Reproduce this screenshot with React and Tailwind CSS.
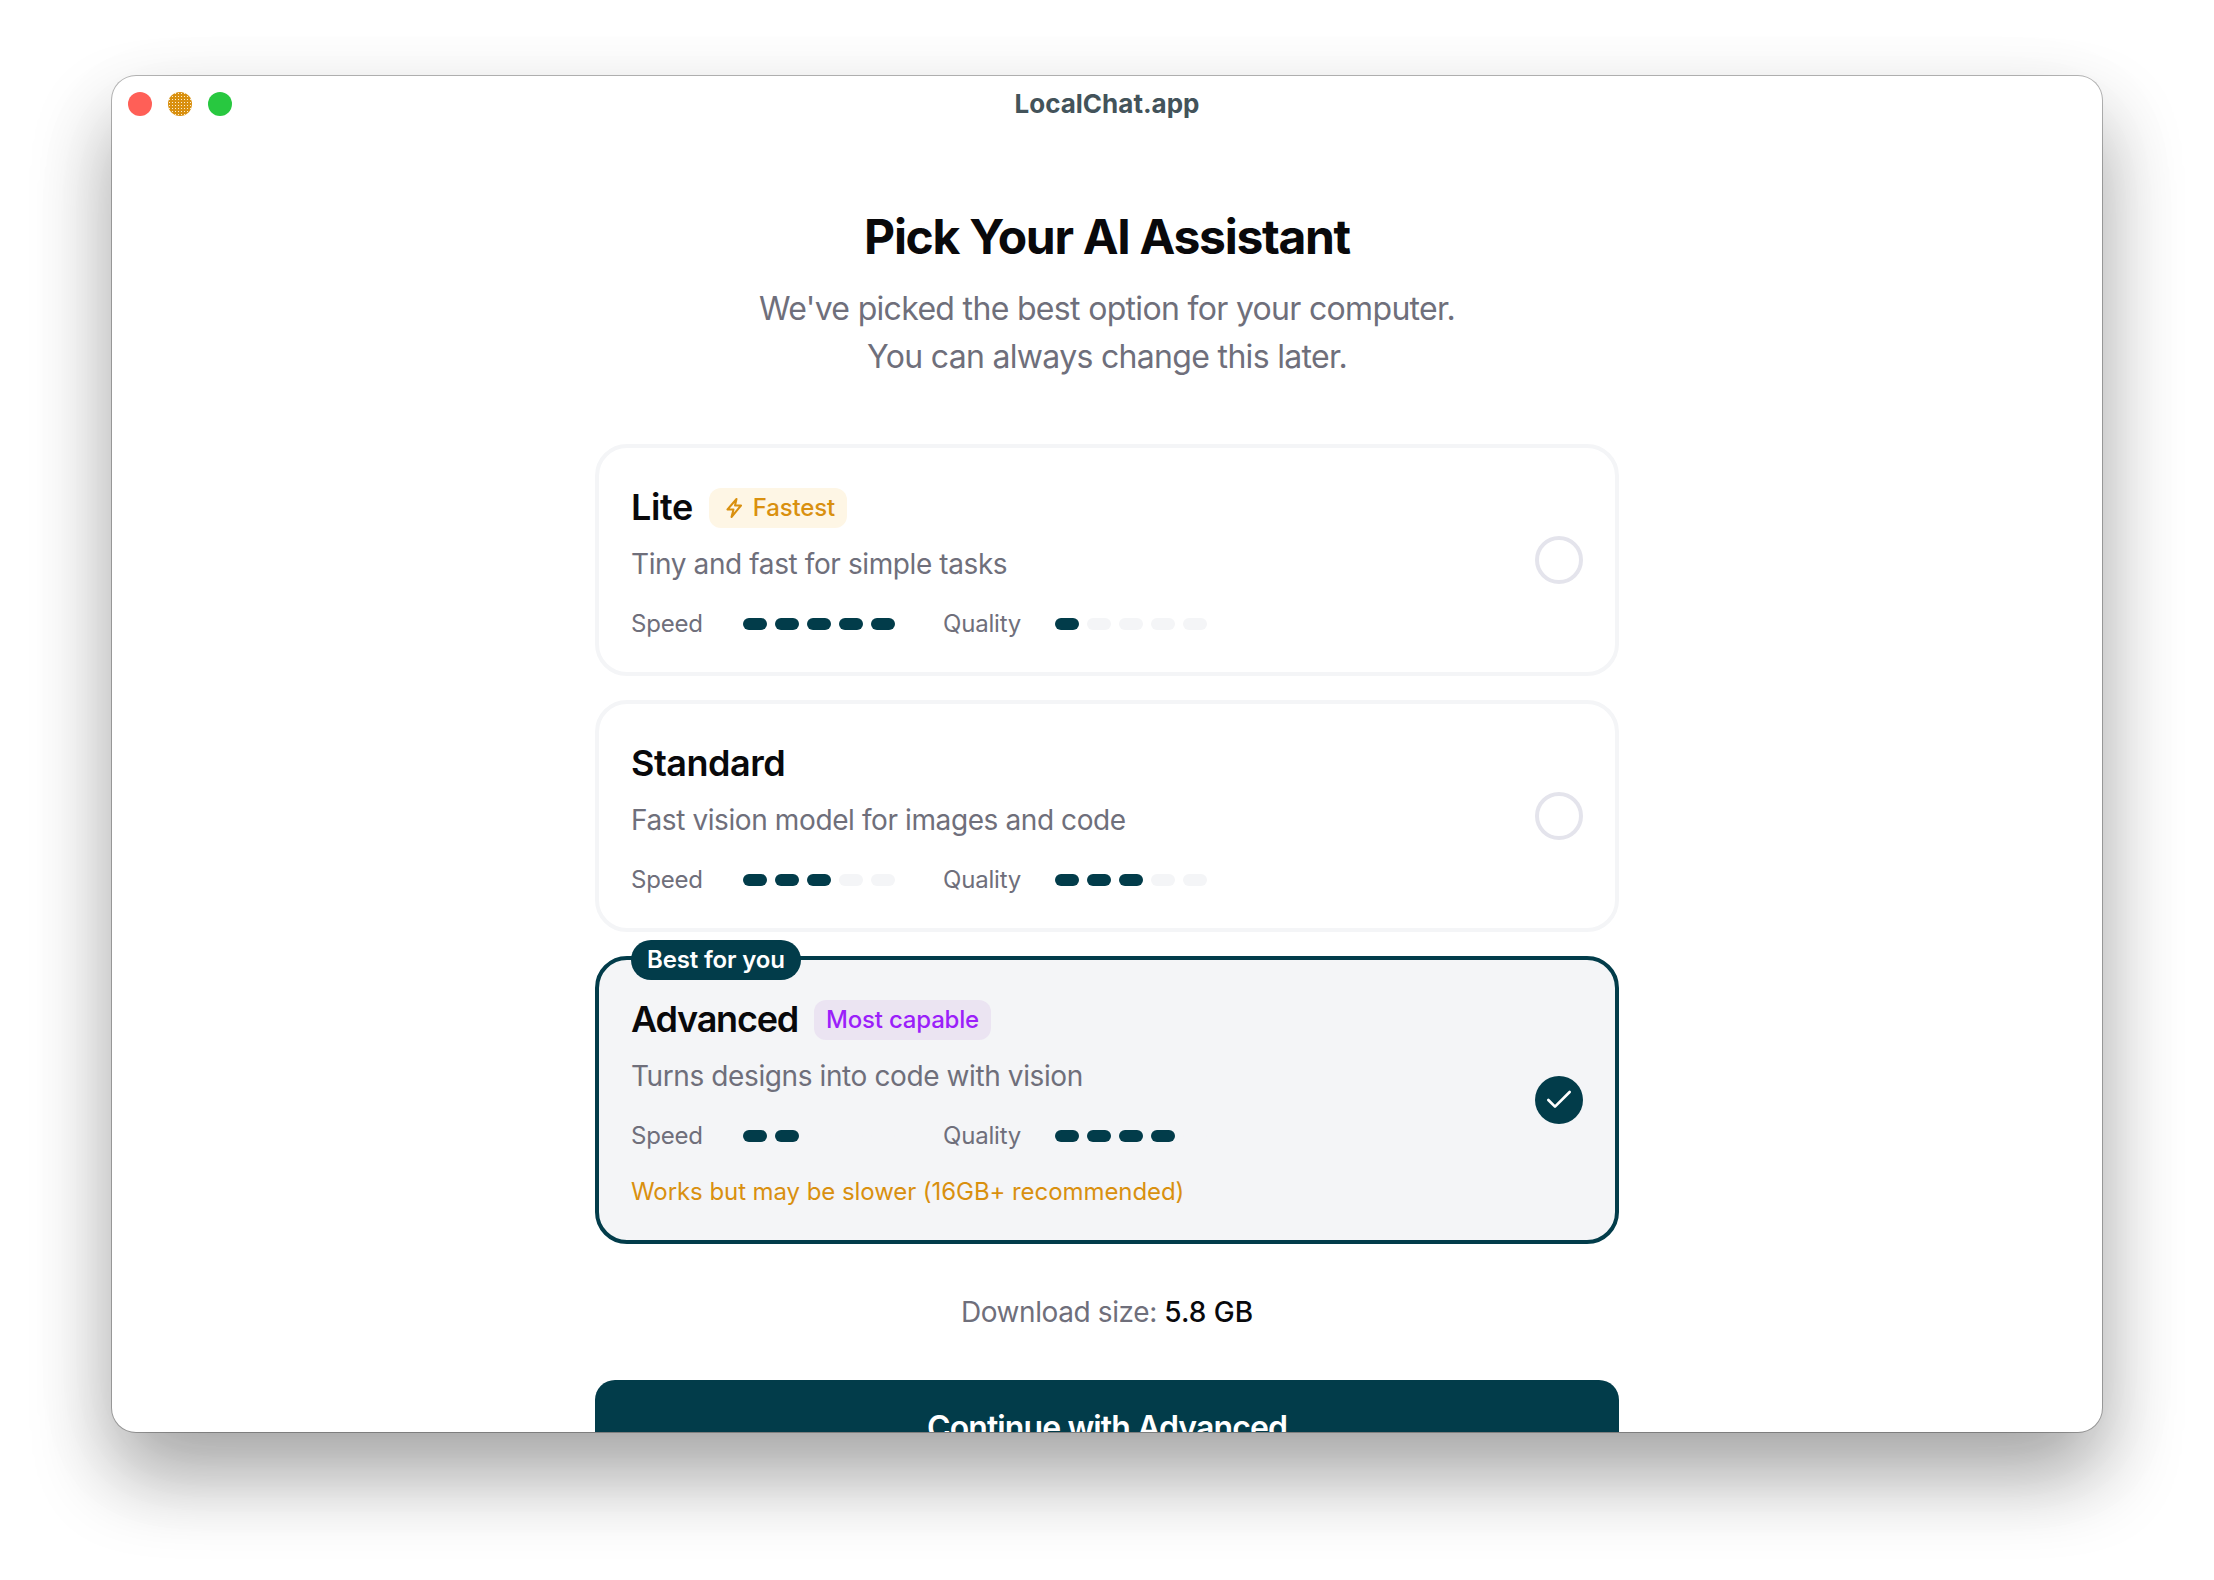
import React from "react";
import { Check } from "lucide-react";

const font = "[font-family:Inter,'Liberation_Sans',sans-serif]";

function Dots({ filled, total }) {
  return (
    <div className="flex w-[152px] gap-2">
      {Array.from({ length: total }).map((_, i) => (
        <div key={i} className={i < filled ? "h-3 w-6 rounded-full bg-[#023c4a]" : "h-3 w-6 rounded-full bg-[#f4f5f7]"} />
      ))}
    </div>
  );
}

function Rating({ speed, quality }) {
  return (
    <div className="mt-6 flex h-8 items-center text-[24px] leading-8 tracking-[-0.2px] text-[#6f6f7b]">
      <div className="w-[88px]">Speed</div>
      <div className="ml-6"><Dots filled={speed} total={5} /></div>
      <div className="ml-12 w-[88px]">Quality</div>
      <div className="ml-6"><Dots filled={quality} total={5} /></div>
    </div>
  );
}

function Bolt() {
  return (
    <svg width="24" height="24" viewBox="0 0 24 24" fill="none" stroke="#d9900f" strokeWidth="2" strokeLinejoin="round" strokeLinecap="round">
      <path d="M15.5 3 6.5 13.5H12.5L10.5 21 20 9.5H14L15.5 3z" />
    </svg>
  );
}

function Card({ name, nameClass, badge, desc, speed, quality, warning, selected, top }) {
  return (
    <div className={selected
      ? "relative flex items-center justify-between rounded-[32px] border-4 border-[#023c4a] bg-[#f4f5f7] p-8"
      : "relative flex items-center justify-between rounded-[32px] border-4 border-[#f4f5f7] bg-white p-8"}>
      {top && (
        <div className="absolute left-8 top-[-20px] flex h-10 items-center rounded-[20px] bg-[#023c4a] px-4 text-[24px] font-semibold tracking-[-0.15px] text-white">
          {top}
        </div>
      )}
      <div className="flex-1">
        <div className="flex h-14 items-center gap-4">
          <div className={`pb-[2px] text-[36px] font-semibold leading-[54px] text-[#09090b] ${nameClass}`}>{name}</div>
          {badge}
        </div>
        <div className="mt-2 text-[28px] leading-10 tracking-[-0.4px] text-[#6f6f7b]">{desc}</div>
        <Rating speed={speed} quality={quality} />
        {warning && <div className="mt-6 text-[24px] leading-8 tracking-[-0.07px] text-[#d9900f]">{warning}</div>}
      </div>
      {selected ? (
        <div className="flex h-12 w-12 items-center justify-center rounded-full bg-[#023c4a]">
          <Check size={32} color="#ffffff" strokeWidth={2} />
        </div>
      ) : (
        <div className="h-12 w-12 rounded-full border-4 border-[#e4e4ec]" />
      )}
    </div>
  );
}

export default function App() {
  return (
    <div className={`${font} h-[1580px] w-[2214px] overflow-hidden bg-white pl-[112px] pt-[76px]`}>
      <div className="h-[1356px] w-[1990px] overflow-hidden rounded-[24px] bg-white shadow-[0_0_0_1px_rgba(0,0,0,0.28),0_44px_80px_0_rgba(0,0,0,0.33),0_30px_100px_0_rgba(0,0,0,0.05)]">
        <div className="relative flex h-14 items-center justify-center">
          <div className="absolute left-4 top-4 flex gap-4">
            <div className="h-6 w-6 rounded-full bg-[#ff5f57]" />
            <div className="h-6 w-6 rounded-full bg-[#d9900f] bg-[radial-gradient(circle,#fbeed2_1px,transparent_1px)] bg-[length:3px_3px]" />
            <div className="h-6 w-6 rounded-full bg-[#28c840]" />
          </div>
          <div className="pb-[2px] text-[26px] font-bold text-[#43535a]">LocalChat.app</div>
        </div>
        <div className="mx-auto mt-[74px] w-[1024px]">
          <h1 className="text-center text-[48px] font-bold leading-[62px] tracking-[-1.3px] text-[#09090b]">Pick Your AI Assistant</h1>
          <p className="mt-[17px] text-center text-[32px] leading-[48px] tracking-[-0.68px] text-[#6f6f7b]">
            We've picked the best option for your computer.
            <br />
            You can always change this later.
          </p>
          <div className="mt-[63px] flex flex-col gap-6">
            <Card
              name="Lite"
              nameClass="tracking-[-0.4px]"
              badge={
                <div className="flex h-10 items-center gap-2 rounded-xl bg-[#fef6e5] px-3 text-[24px] font-medium tracking-[-0.15px] text-[#d9900f]">
                  <Bolt />
                  Fastest
                </div>
              }
              desc="Tiny and fast for simple tasks"
              speed={5}
              quality={1}
            />
            <Card name="Standard" nameClass="tracking-[-0.5px]" desc="Fast vision model for images and code" speed={3} quality={3} />
            <Card
              name="Advanced"
              nameClass="tracking-[-1.2px]"
              badge={
                <div className="flex h-10 items-center rounded-xl bg-[#ebe4f2] px-3 text-[24px] font-medium tracking-[-0.2px] text-[#9b1ffa]">
                  Most capable
                </div>
              }
              desc="Turns designs into code with vision"
              speed={2}
              quality={4}
              warning="Works but may be slower (16GB+ recommended)"
              selected
              top="Best for you"
            />
          </div>
          <div className="mt-12 text-center text-[28px] leading-10 tracking-[-0.4px] text-[#6f6f7b]">
            Download size: <span className="font-medium tracking-normal text-[#09090b]">5.8 GB</span>
          </div>
          <div className="mt-12 flex h-24 items-center justify-center rounded-[20px] bg-[#023c4a] text-[32px] font-semibold tracking-[-0.9px] text-white">
            Continue with Advanced
          </div>
        </div>
      </div>
    </div>
  );
}
